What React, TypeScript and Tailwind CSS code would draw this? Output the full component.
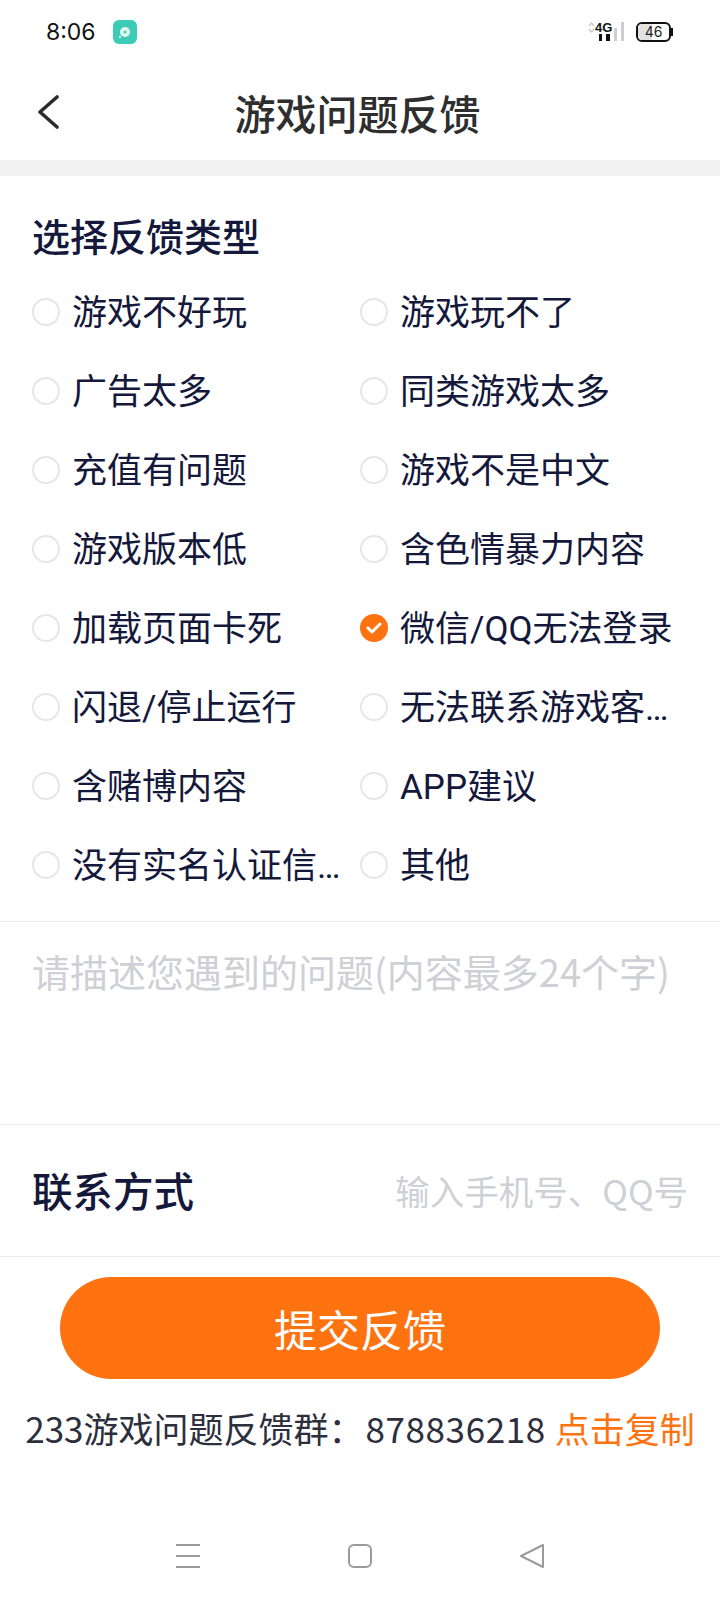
import React from "react";

const CJK = "font-['Noto_Sans_CJK_SC','Noto_Sans',sans-serif]";

const options: [string, string][] = [
  ["游戏不好玩", "游戏玩不了"],
  ["广告太多", "同类游戏太多"],
  ["充值有问题", "游戏不是中文"],
  ["游戏版本低", "含色情暴力内容"],
  ["加载页面卡死", "微信/QQ无法登录"],
  ["闪退/停止运行", "无法联系游戏客服"],
  ["含赌博内容", "APP建议"],
  ["没有实名认证信息", "其他"],
];

const selected = "微信/QQ无法登录";

function Radio({ checked }: { checked: boolean }) {
  if (checked) {
    return (
      <span className="flex h-7 w-7 shrink-0 items-center justify-center rounded-full bg-[#ff7210]">
        <svg width="16" height="12" viewBox="0 0 16 12" fill="none">
          <path d="M2 6l4 4 8-8" stroke="#fff" strokeWidth="3" strokeLinecap="round" strokeLinejoin="round" />
        </svg>
      </span>
    );
  }
  return <span className="h-7 w-7 shrink-0 rounded-full border-2 border-[#e6e6e6]" />;
}

// Roboto comes first so the truncation ellipsis stays narrow
function Option({ label }: { label: string }) {
  return (
    <div className="flex h-[79px] items-center">
      <Radio checked={label === selected} />
      <span className="ml-3 w-[275px] truncate pt-[5px] font-['Roboto','Noto_Sans_CJK_SC',sans-serif] text-[35px] leading-[50px] text-[#14183a]">
        {label}
      </span>
    </div>
  );
}

function StatusBar() {
  return (
    <div className="flex h-[64px] items-center justify-between pl-[46px] pr-[47px]">
      <div className="flex items-center gap-[17px]">
        <span className="font-['Inter',sans-serif] text-[23px] leading-none text-[#111]">8:06</span>
        <span className="flex h-6 w-6 items-center justify-center rounded-[6px] bg-[#3ccbb4]">
          <svg width="16" height="16" viewBox="0 0 16 16">
            <circle cx="8" cy="8" r="5" fill="#fff" opacity="0.85" />
            <circle cx="8" cy="8" r="1.5" fill="#3ccbb4" />
            <circle cx="3" cy="13" r="1" fill="#fff" />
          </svg>
        </span>
      </div>
      <div className="flex items-center gap-[10px]">
        <svg width="38" height="24" viewBox="0 0 38 24">
          <path d="M1 6l2.5-3L6 6M1 9l2.5 3L6 9" fill="none" stroke="#c8c8c8" strokeWidth="1.4" />
          <text x="7" y="12" fontFamily="'Liberation Sans',sans-serif" fontWeight="700" fontSize="13" fill="#111">4G</text>
          <rect x="11" y="14" width="3" height="7" fill="#111" />
          <rect x="18" y="14" width="4" height="7" fill="#111" />
          <rect x="26" y="8" width="3" height="13" fill="#cfcfcf" />
          <rect x="33" y="2" width="3" height="19" fill="#cfcfcf" />
        </svg>
        <div className="flex items-center">
          <div className="relative flex h-[20px] w-[35px] items-center justify-center overflow-hidden rounded-[6px] border-2 border-[#111]">
            <div className="absolute inset-y-0 left-0 w-[46%] bg-[#e2e2e2]" />
            <span className="relative font-['Inter',sans-serif] text-[14px] leading-none text-[#222]">46</span>
          </div>
          <div className="h-[8px] w-[2px] bg-[#111]" />
        </div>
      </div>
    </div>
  );
}

export default function App() {
  return (
    <div className={`flex h-[1600px] w-[720px] flex-col overflow-hidden bg-white ${CJK}`}>
      <StatusBar />

      {/* header */}
      <div className="relative flex h-[96px] items-center justify-center pr-[5px]">
        <button className="absolute left-[38px] top-[31px]">
          <svg width="22" height="34" viewBox="0 0 22 34" fill="none">
            <path d="M19 2L2 17l17 15" stroke="#2b2b2b" strokeWidth="3.6" strokeLinecap="round" strokeLinejoin="round" />
          </svg>
        </button>
        <h1 className="text-[41px] font-medium leading-none text-[#2e2e2e]">游戏问题反馈</h1>
      </div>
      <div className="h-4 bg-[#f1f1f1]" />

      <div className="px-[32px] pt-[36px]">
        <h2 className="text-[38px] font-medium leading-[46px] text-[#14183a]">选择反馈类型</h2>
        <div className="mt-[14px] grid grid-cols-[328px_1fr]">
          {options.flat().map((label) => (
            <Option key={label} label={label} />
          ))}
        </div>
      </div>

      <div className="mt-[17px] h-[204px] border-y border-[#ececec] px-[32px] pt-[30px] text-[38px] leading-none text-[#cfd0d6]">
        请描述您遇到的问题(内容最多24个字)
      </div>

      <div className="flex h-[132px] items-center justify-between border-b border-[#ececec] pl-[32px] pr-[32px]">
        <span className="text-[40.5px] font-medium leading-none text-[#14183a]">联系方式</span>
        <span className="text-[34.5px] leading-none text-[#cfd0d6]">输入手机号、QQ号</span>
      </div>

      <div className="mt-5 flex h-[102px] w-[600px] items-center justify-center self-center rounded-full bg-[#ff7210]">
        <span className="text-[43px] leading-none text-white">提交反馈</span>
      </div>

      <div className="mt-[27px] flex justify-center whitespace-nowrap text-[35px] leading-[44px] text-[#2d2f3d]">
        <span>233游戏问题反馈群：</span>
        <span className="ml-[2px] tracking-[0.6px]">878836218</span>
        <span className="ml-[9px] text-[#ff7210]">点击复制</span>
      </div>

      {/* system navigation */}
      <div className="mt-[86px] flex h-[40px] items-center justify-center gap-[148px]">
        <svg width="24" height="24" viewBox="0 0 24 24" fill="none" stroke="#9a9a9a" strokeWidth="2">
          <path d="M0 1h24M0 12h24M0 23h24" />
        </svg>
        <svg width="24" height="24" viewBox="0 0 24 24" fill="none" stroke="#9a9a9a" strokeWidth="2">
          <rect x="1" y="1" width="22" height="22" rx="5" />
        </svg>
        <svg width="24" height="24" viewBox="0 0 24 24" fill="none" stroke="#9a9a9a" strokeWidth="2" strokeLinejoin="round">
          <path d="M23 1v22L1 12z" />
        </svg>
      </div>
    </div>
  );
}
